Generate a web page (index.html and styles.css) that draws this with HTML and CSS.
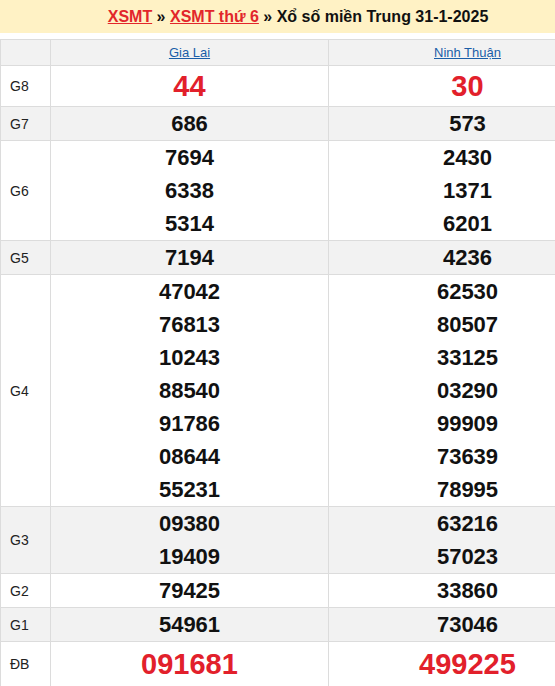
FILE: index.html
```html
<!DOCTYPE html>
<html lang="vi">
<head>
<meta charset="utf-8">
<title>XSMT 31-1-2025</title>
<link rel="stylesheet" href="styles.css">
</head>
<body>
<div class="title">
  <a href="#">XSMT</a> » <a href="#">XSMT thứ 6</a> » Xổ số miền Trung 31-1-2025
</div>
<table class="kq">
  <tr class="head">
    <th class="lbl"></th>
    <th><a href="#">Gia Lai</a></th>
    <th><a href="#">Ninh Thuận</a></th>
  </tr>
  <tr>
    <td class="lbl">G8</td>
    <td><div class="n big">44</div></td>
    <td><div class="n big">30</div></td>
  </tr>
  <tr class="alt">
    <td class="lbl">G7</td>
    <td><div class="n">686</div></td>
    <td><div class="n">573</div></td>
  </tr>
  <tr>
    <td class="lbl">G6</td>
    <td><div class="n">7694</div><div class="n">6338</div><div class="n">5314</div></td>
    <td><div class="n">2430</div><div class="n">1371</div><div class="n">6201</div></td>
  </tr>
  <tr class="alt">
    <td class="lbl">G5</td>
    <td><div class="n">7194</div></td>
    <td><div class="n">4236</div></td>
  </tr>
  <tr>
    <td class="lbl">G4</td>
    <td><div class="n">47042</div><div class="n">76813</div><div class="n">10243</div><div class="n">88540</div><div class="n">91786</div><div class="n">08644</div><div class="n">55231</div></td>
    <td><div class="n">62530</div><div class="n">80507</div><div class="n">33125</div><div class="n">03290</div><div class="n">99909</div><div class="n">73639</div><div class="n">78995</div></td>
  </tr>
  <tr class="alt">
    <td class="lbl">G3</td>
    <td><div class="n">09380</div><div class="n">19409</div></td>
    <td><div class="n">63216</div><div class="n">57023</div></td>
  </tr>
  <tr>
    <td class="lbl">G2</td>
    <td><div class="n">79425</div></td>
    <td><div class="n">33860</div></td>
  </tr>
  <tr class="alt">
    <td class="lbl">G1</td>
    <td><div class="n">54961</div></td>
    <td><div class="n">73046</div></td>
  </tr>
  <tr class="db">
    <td class="lbl">ĐB</td>
    <td><div class="n big">091681</div></td>
    <td><div class="n big">499225</div></td>
  </tr>
</table>
</body>
</html>
```
FILE: styles.css
```css
html {
  overflow: hidden;
}
body {
  margin: 0;
  font-family: "Liberation Sans", Arial, sans-serif;
  color: #000;
  background: #fff;
}
.title {
  height: 33px;
  line-height: 33px;
  background: #fff2c5;
  text-align: center;
  font-weight: bold;
  font-size: 16px;
  color: #111;
  margin-bottom: 6px;
  width: 596px;
}
.title a {
  color: #e2262b;
  text-decoration: underline;
}
.kq {
  border-collapse: collapse;
  width: 607px;
  table-layout: fixed;
}
.kq th,
.kq td {
  border: 1px solid #dcdcdc;
  padding: 0;
  text-align: center;
  vertical-align: middle;
}
.kq .lbl {
  width: 40px;
  padding-left: 9px;
  text-align: left;
  font-size: 14px;
  font-weight: normal;
  color: #222;
}
.kq tr.head th {
  background: #f2f2f2;
  height: 25px;
  font-size: 13px;
  font-weight: normal;
}
.kq tr.head a {
  color: #1a5ea8;
  text-decoration: underline;
}
.kq tr.alt td {
  background: #f2f2f2;
}
.n {
  font-size: 22px;
  font-weight: bold;
  line-height: 33px;
  color: #111;
}
.n.big {
  font-size: 29px;
  line-height: 40px;
  color: #e2202b;
}
.kq tr.db .n.big {
  line-height: 44px;
}
```
